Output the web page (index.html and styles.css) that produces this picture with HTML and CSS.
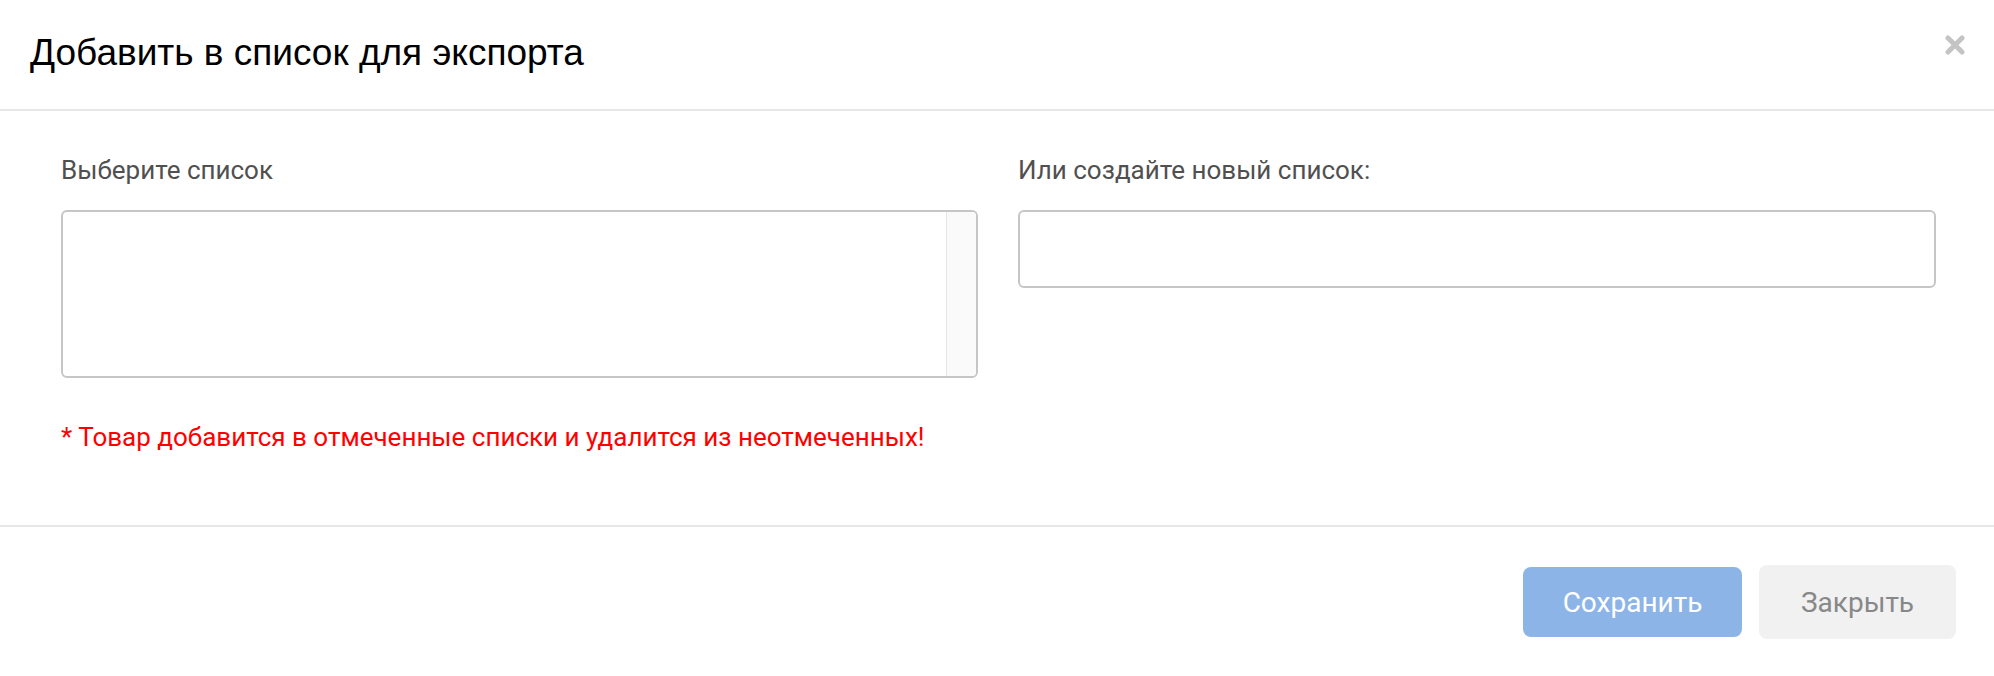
FILE: index.html
```html
<!DOCTYPE html>
<html lang="ru">
<head>
    <meta charset="UTF-8">
    <meta name="viewport" content="width=device-width, initial-scale=1.0">
    <title>Добавить в список для экспорта</title>
    <link rel="stylesheet" href="styles.css">
</head>
<body>
    <div class="modal">
        <div class="modal-header">
            <h2 class="modal-title">Добавить в список для экспорта</h2>
            <button type="button" class="close-btn" aria-label="Закрыть">
                <svg width="20" height="20" viewBox="0 0 20 20">
                    <path d="M3 3 L17 17 M17 3 L3 17" stroke="#c4c4c4" stroke-width="5" stroke-linecap="round"/>
                </svg>
            </button>
        </div>

        <div class="modal-body">
            <div class="columns">
                <div class="form-group">
                    <label for="export-list">Выберите список</label>
                    <div class="list-box" id="export-list">
                        <div class="list-items"></div>
                        <div class="list-scroll"></div>
                    </div>
                </div>
                <div class="form-group">
                    <label for="new-list">Или создайте новый список:</label>
                    <input type="text" id="new-list" name="new-list">
                </div>
            </div>
            <p class="note">* Товар добавится в отмеченные списки и удалится из неотмеченных!</p>
        </div>

        <div class="modal-footer">
            <button type="button" class="btn btn-save">Сохранить</button>
            <button type="button" class="btn btn-close">Закрыть</button>
        </div>
    </div>
</body>
</html>
```

FILE: styles.css
```css
body {
    margin: 0;
    background: #fff;
    font-family: 'Roboto', 'Liberation Sans', sans-serif;
}
.modal {
    width: 1994px;
}
.modal-header {
    display: flex;
    justify-content: space-between;
    align-items: center;
    height: 111px;
    padding: 0 29px 0 30px;
    box-sizing: border-box;
    border-bottom: 2px solid #e6e6e6;
}
.modal-title {
    margin: 0;
    font-family: 'Liberation Sans', Arial, sans-serif;
    font-weight: normal;
    font-size: 37px;
    color: #000;
    padding-bottom: 4px;
}
.close-btn {
    background: none;
    border: none;
    padding: 0;
    width: 20px;
    height: 20px;
    margin-bottom: 20px;
    cursor: pointer;
}
.modal-body {
    padding: 43px 58px 72px 61px;
}
.columns {
    display: grid;
    grid-template-columns: 917px 918px;
    gap: 40px;
}
label {
    display: block;
    font-size: 26px;
    line-height: 32px;
    color: #505050;
    margin-bottom: 24px;
}
.list-box {
    display: flex;
    height: 168px;
    border: 2px solid #c6c6c6;
    border-radius: 6px;
    box-sizing: border-box;
    overflow: hidden;
}
.list-items {
    flex: 1;
}
.list-scroll {
    width: 29px;
    background: #fafafa;
    border-left: 1px solid #e6e6e6;
}
input {
    display: block;
    width: 100%;
    height: 78px;
    border: 2px solid #c6c6c6;
    border-radius: 6px;
    box-sizing: border-box;
    padding: 0 16px;
    font-family: inherit;
    font-size: 26px;
}
.note {
    margin: 43px 0 0;
    font-size: 26px;
    line-height: 32px;
    color: #ff0000;
}
.modal-footer {
    display: flex;
    justify-content: flex-end;
    align-items: center;
    gap: 17px;
    padding: 38px 38px 38px 0;
    border-top: 2px solid #e6e6e6;
}
.btn {
    font-family: inherit;
    font-size: 28px;
    border-radius: 8px;
    cursor: pointer;
}
.btn-save {
    width: 219px;
    height: 70px;
    background: #8db4e7;
    color: #fff;
    border: none;
}
.btn-close {
    width: 197px;
    height: 74px;
    background: #f1f1f1;
    color: #888;
    border: none;
}
```
